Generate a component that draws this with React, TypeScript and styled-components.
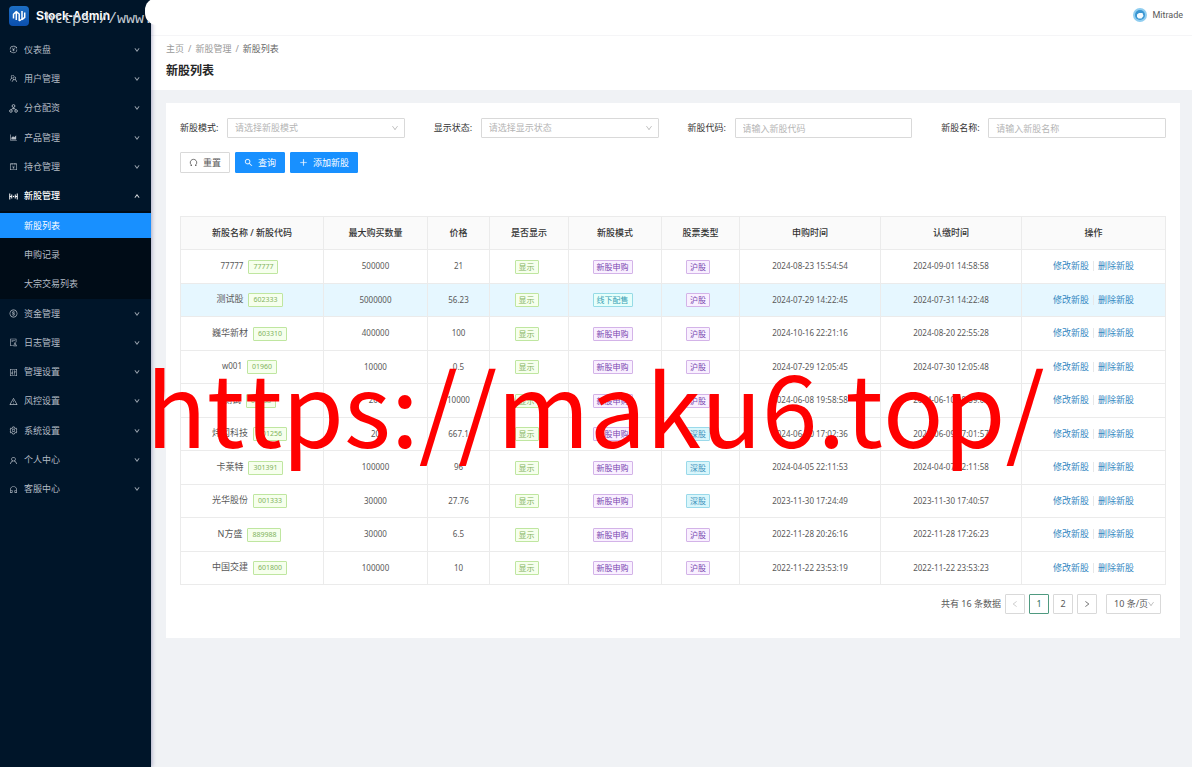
import React from 'react';
import styled, { createGlobalStyle, css } from 'styled-components';
import {
  AiOutlineTransaction,
  AiOutlineTeam,
  AiOutlineAreaChart,
  AiOutlineAccountBook,
  AiOutlineDollar,
  AiOutlineAudit,
  AiOutlineControl,
  AiOutlineWarning,
  AiOutlineSetting,
  AiOutlineUser,
  AiOutlineCustomerService,
  AiOutlineDown,
  AiOutlineUp,
  AiOutlineLeft,
  AiOutlineRight,
  AiOutlineSearch,
  AiOutlinePlus,
} from 'react-icons/ai';

const GlobalStyle = createGlobalStyle`
  * { box-sizing: border-box; }
  body {
    margin: 0;
    background: #f0f2f5;
    color: #595959;
    font-family: "Noto Sans", "Noto Sans CJK SC", sans-serif;
    font-size: 9px;
    line-height: 14px;
  }
  button, input, select { font: inherit; color: inherit; margin: 0; }
  ul, ol { list-style: none; margin: 0; padding: 0; }
  a { color: inherit; text-decoration: none; }
`;

const Page = styled.div`
  position: relative;
  display: flex;
  min-height: 100vh;
`;

const Sidebar = styled.aside`
  position: relative;
  flex: 0 0 151px;
  background: #001529;
  color: #b4bcc5;
  box-shadow: 1px 0 4px rgba(40, 40, 110, 0.35);
`;

const Brand = styled.div`
  display: flex;
  align-items: center;
  gap: 7px;
  height: 35px;
  padding: 0 0 3px 9px;
  color: #fff;
  font: bold 12px/16px "Liberation Sans", sans-serif;
`;

const BrandMark = styled.svg`
  width: 20px;
  height: 20px;
`;

const BrandStamp = styled.span`
  position: absolute;
  top: 10px;
  left: 45px;
  color: #c3cad2;
  font: 15px/20px "Liberation Mono", monospace;
  white-space: nowrap;
  pointer-events: none;
`;

const CornerPatch = styled.span`
  position: absolute;
  top: -2px;
  left: 145px;
  width: 40px;
  height: 27px;
  border-radius: 12px;
  background: #fff;
`;

const MenuGroup = styled.ul<{ $height: number; $nested?: boolean }>`
  display: grid;
  grid-auto-rows: 1fr;
  align-items: center;
  min-height: ${(p) => p.$height}px;
  background: ${(p) => (p.$nested ? '#000c17' : 'transparent')};
`;

const MenuButton = styled.button<{ $open?: boolean }>`
  display: flex;
  align-items: center;
  gap: 6px;
  width: 100%;
  height: 25px;
  padding: 0 11px 0 9px;
  border: 0;
  background: none;
  color: ${(p) => (p.$open ? '#fff' : 'inherit')};
  font-weight: ${(p) => (p.$open ? 500 : 400)};
  text-align: left;

  span { flex: 1; }
  > svg:first-child { width: 9px; height: 9px; }
  > svg:last-child { width: 6px; height: 6px; stroke: currentColor; stroke-width: 60px; }
`;

const SubLink = styled.a<{ $active?: boolean }>`
  display: flex;
  align-items: center;
  height: 25px;
  padding-left: 24px;
  ${(p) =>
    p.$active &&
    css`
      background: #1890ff;
      color: #fff;
    `}
`;

const Main = styled.div`
  flex: 1;
  min-width: 0;
`;

const TopBar = styled.header`
  display: flex;
  align-items: center;
  justify-content: flex-end;
  gap: 5px;
  height: 36px;
  padding: 0 9px 5px;
  border-bottom: 1px solid #f5f5f7;
  background: #fff;
  font-family: Roboto, sans-serif;
`;

const Avatar = styled.svg`
  width: 14px;
  height: 14px;
`;

const PageHead = styled.div`
  height: 54px;
  padding: 6px 15px;
  background: #fff;
`;

const Crumbs = styled.ol`
  display: flex;
  gap: 4px;
  color: #999;

  li + li::before {
    content: "/";
    margin-right: 4px;
    color: #999;
  }
  li:last-child { color: #666; }
`;

const Title = styled.h1`
  margin: 6px 0 0;
  color: #262626;
  font-size: 12px;
  font-weight: 700;
  line-height: 18px;
`;

const Card = styled.main`
  margin: 13px 12px 13px 15px;
  padding: 15px 14px 24px;
  background: #fff;
`;

const Filters = styled.form`
  display: grid;
  grid-template-columns: repeat(4, 1fr);
  gap: 14px 29px;
`;

const Field = styled.div`
  display: flex;
  align-items: center;

  label {
    flex: 0 0 47px;
    color: #333;
  }
`;

const controlBox = css`
  height: 20px;
  border: 1px solid #d9d9d9;
  border-radius: 1px;
  background: #fff;
`;

const TextInput = styled.input`
  ${controlBox}
  flex: 1;
  min-width: 0;
  padding: 0 7px;
  &::placeholder { color: #b5b5b5; opacity: 1; }
`;

const SelectWrap = styled.span`
  position: relative;
  display: flex;
  flex: 1;
  min-width: 0;

  svg {
    position: absolute;
    top: 6px;
    right: 6px;
    width: 8px;
    height: 8px;
    color: #b5b5b5;
    pointer-events: none;
  }
`;

const Select = styled.select<{ $empty?: boolean }>`
  ${controlBox}
  appearance: none;
  width: 100%;
  padding: 0 7px;
  color: ${(p) => (p.$empty ? '#b5b5b5' : '#595959')};
`;

const Actions = styled.div`
  display: flex;
  grid-column: 1 / -1;
  gap: 5px;
`;

const Button = styled.button<{ $primary?: boolean }>`
  ${controlBox}
  display: flex;
  align-items: center;
  gap: 5px;
  height: 21px;
  padding: 0 8px;

  svg { width: 9px; height: 9px; stroke: currentColor; stroke-width: 20px; }
  ${(p) =>
    p.$primary &&
    css`
      border-color: #1890ff;
      background: #1890ff;
      color: #fff;
    `}
`;

const Table = styled.table`
  width: 100%;
  height: 369px;
  margin-top: 43px;
  border-collapse: collapse;
  table-layout: fixed;
  text-align: center;

  th, td {
    padding: 0;
    border: 1px solid #ebebeb;
  }
  th {
    height: 33px;
    background: #fafafa;
    color: #333;
    font-weight: 500;
  }
`;

const Col = styled.col<{ $w: number }>`
  width: ${(p) => p.$w}px;
`;

const Row = styled.tr<{ $hover?: boolean }>`
  background: ${(p) => (p.$hover ? '#e6f7ff' : '#fff')};
`;

const NumCell = styled.td`
  font-size: 8px;
`;

const NameText = styled.span<{ $latin: boolean }>`
  margin-right: 5px;
  font-size: ${(p) => (p.$latin ? 8 : 9)}px;
`;

const tones = {
  green: ['#7fb35c', '#f6ffed', '#bfe6a0'],
  purple: ['#7a48b0', '#f9f0ff', '#d3b3e8'],
  cyan: ['#3a9fb5', '#e6fffb', '#96dbe6'],
  blue: ['#3f93bd', '#d9f6fb', '#9ad9ea'],
};
type Tone = keyof typeof tones;

const Tag = styled.span<{ $tone: Tone; $code?: boolean }>`
  display: inline-block;
  margin-right: 5px;
  padding: 0 ${(p) => (p.$code ? 4 : 3)}px;
  border: 1px solid ${(p) => tones[p.$tone][2]};
  border-radius: 1px;
  background: ${(p) => tones[p.$tone][1]};
  color: ${(p) => tones[p.$tone][0]};
  font-size: ${(p) => (p.$code ? 7 : 8)}px;
  line-height: 12px;
  vertical-align: middle;
`;

const RowLinks = styled.div`
  display: flex;
  align-items: center;
  justify-content: center;
  color: #3387bf;

  a + a {
    margin-left: 4px;
    padding-left: 4px;
    border-left: 1px solid #e8e8e8;
    line-height: 10px;
  }
`;

const Pager = styled.nav`
  display: flex;
  align-items: center;
  justify-content: flex-end;
  gap: 4px;
  margin-top: 9px;
  padding-right: 5px;
`;

const PageButton = styled.button<{ $current?: boolean }>`
  ${controlBox}
  display: grid;
  place-items: center;
  width: 20px;
  padding: 0;
  ${(p) =>
    p.$current &&
    css`
      border-color: #4f9a80;
      color: #2f6f5a;
    `}
  &:disabled { color: #c4c4c4; }
  svg { width: 8px; height: 8px; }
`;

const PageSize = styled.div`
  display: flex;
  width: 60px;
  padding-left: 5px;
`;

const Watermark = styled.div`
  position: absolute;
  top: 332px;
  left: 146px;
  color: #f00;
  font: 100px/145px "Noto Sans CJK SC", sans-serif;
  font-kerning: none;
  white-space: nowrap;
  pointer-events: none;
`;

const NodesIcon = () => (
  <svg viewBox="0 0 18 18" fill="none" stroke="currentColor" strokeWidth="1.8" aria-hidden="true">
    <circle cx="9" cy="4" r="2.8" />
    <circle cx="3.8" cy="14" r="2.6" />
    <circle cx="14.2" cy="14" r="2.6" />
    <path d="M9 7V9.5M4.5 11.5L6 9.5H12L13.5 11.5" />
  </svg>
);

const IssueIcon = () => (
  <svg viewBox="0 0 18 18" fill="none" stroke="currentColor" strokeWidth="2" aria-hidden="true">
    <path d="M1.5 3V15M16.5 3V15M5.5 5V13M12.5 5V13M1.5 9H5.5M12.5 9H16.5" />
    <circle cx="9" cy="9" r="1.4" fill="currentColor" stroke="none" />
  </svg>
);

const ResetIcon = () => (
  <svg viewBox="0 0 1024 1024" fill="none" aria-hidden="true">
    <path d="M340 850A370 370 0 1 1 684 850M340 850H170M684 850H854" strokeWidth="95" />
  </svg>
);

const menuTop = [
  { icon: AiOutlineTransaction, label: '仪表盘' },
  { icon: AiOutlineTeam, label: '用户管理' },
  { icon: NodesIcon, label: '分仓配资' },
  { icon: AiOutlineAreaChart, label: '产品管理' },
  { icon: AiOutlineAccountBook, label: '持仓管理' },
  { icon: IssueIcon, label: '新股管理', open: true },
];

const menuSub = ['新股列表', '申购记录', '大宗交易列表'];

const menuBottom = [
  { icon: AiOutlineDollar, label: '资金管理' },
  { icon: AiOutlineAudit, label: '日志管理' },
  { icon: AiOutlineControl, label: '管理设置' },
  { icon: AiOutlineWarning, label: '风控设置' },
  { icon: AiOutlineSetting, label: '系统设置' },
  { icon: AiOutlineUser, label: '个人中心' },
  { icon: AiOutlineCustomerService, label: '客服中心' },
];

type MenuEntry = { icon: React.ComponentType; label: string; open?: boolean };

const MenuItem = ({ icon: Icon, label, open }: MenuEntry) => (
  <li>
    <MenuButton type="button" $open={open} aria-expanded={!!open}>
      <Icon />
      <span>{label}</span>
      {open ? <AiOutlineUp /> : <AiOutlineDown />}
    </MenuButton>
  </li>
);

const columns = [
  { title: '新股名称 / 新股代码', w: 143 },
  { title: '最大购买数量', w: 104 },
  { title: '价格', w: 62 },
  { title: '是否显示', w: 79 },
  { title: '新股模式', w: 93 },
  { title: '股票类型', w: 78 },
  { title: '申购时间', w: 141 },
  { title: '认缴时间', w: 141 },
  { title: '操作', w: 144 },
];

const rows = [
  ['77777', '77777', '500000', '21', '新股申购', '沪股', '2024-08-23 15:54:54', '2024-09-01 14:58:58'],
  ['测试股', '602333', '5000000', '56.23', '线下配售', '沪股', '2024-07-29 14:22:45', '2024-07-31 14:22:48'],
  ['巍华新材', '603310', '400000', '100', '新股申购', '沪股', '2024-10-16 22:21:16', '2024-08-20 22:55:28'],
  ['w001', '01960', '10000', '0.5', '新股申购', '沪股', '2024-07-29 12:05:45', '2024-07-30 12:05:48'],
  ['测试', '01688', '200', '10000', '新股申购', '沪股', '2024-06-08 19:58:58', '2024-06-10 19:59:02'],
  ['炜冈科技', '001256', '20', '667.1', '新股申购', '深股', '2024-06-10 17:02:36', '2024-06-09 17:01:57'],
  ['卡莱特', '301391', '100000', '96', '新股申购', '深股', '2024-04-05 22:11:53', '2024-04-07 22:11:58'],
  ['光华股份', '001333', '30000', '27.76', '新股申购', '深股', '2023-11-30 17:24:49', '2023-11-30 17:40:57'],
  ['N方盛', '889988', '30000', '6.5', '新股申购', '沪股', '2022-11-28 20:26:16', '2022-11-28 17:26:23'],
  ['中国交建', '601800', '100000', '10', '新股申购', '沪股', '2022-11-22 23:53:19', '2022-11-22 23:53:23'],
];

export default function App() {
  return (
    <Page>
      <GlobalStyle />
      <Sidebar>
        <Brand>
          <BrandMark viewBox="0 0 20 20" aria-hidden="true">
            <defs>
              <linearGradient id="mark" x1="0" y1="0" x2="0" y2="1">
                <stop offset="0" stopColor="#1d6fc4" />
                <stop offset="1" stopColor="#0b4fae" />
              </linearGradient>
            </defs>
            <rect width="20" height="20" rx="4" fill="url(#mark)" />
            <path
              d="M4.5 12.5V8.2L7.3 5.6V14M7.3 5.6L10.2 8V15M10.2 15L13 13V5M13 13.6L15.7 11.4V6.6"
              fill="none"
              stroke="#fff"
              strokeWidth="1.5"
              strokeLinejoin="round"
            />
          </BrandMark>
          <span>Stock-Admin</span>
        </Brand>
        <nav aria-label="主菜单">
          <MenuGroup $height={176}>
            {menuTop.map((m) => (
              <MenuItem key={m.label} {...m} />
            ))}
          </MenuGroup>
          <MenuGroup $height={88} $nested>
            {menuSub.map((label, i) => (
              <li key={label}>
                <SubLink href="#" $active={i === 0}>
                  {label}
                </SubLink>
              </li>
            ))}
          </MenuGroup>
          <MenuGroup $height={205}>
            {menuBottom.map((m) => (
              <MenuItem key={m.label} {...m} />
            ))}
          </MenuGroup>
        </nav>
        <CornerPatch />
        <BrandStamp>https://www.</BrandStamp>
      </Sidebar>

      <Main>
        <TopBar>
          <Avatar viewBox="0 0 14 14" aria-hidden="true">
            <circle cx="7" cy="7" r="7" fill="#8fcdf0" />
            <circle cx="7" cy="7" r="5" fill="#3a96d2" />
            <path d="M4 6.5L6 5H9.5L10.5 8L8.5 10.5H5.5L4 9Z" fill="#f4fbff" />
          </Avatar>
          <span>Mitrade</span>
        </TopBar>
        <PageHead>
          <nav aria-label="面包屑">
            <Crumbs>
              <li><a href="#">主页</a></li>
              <li><a href="#">新股管理</a></li>
              <li>新股列表</li>
            </Crumbs>
          </nav>
          <Title>新股列表</Title>
        </PageHead>

        <Card>
          <Filters onSubmit={(e) => e.preventDefault()}>
            <Field>
              <label htmlFor="mode">新股模式:</label>
              <SelectWrap>
                <Select id="mode" $empty defaultValue="">
                  <option value="">请选择新股模式</option>
                </Select>
                <AiOutlineDown />
              </SelectWrap>
            </Field>
            <Field>
              <label htmlFor="status">显示状态:</label>
              <SelectWrap>
                <Select id="status" $empty defaultValue="">
                  <option value="">请选择显示状态</option>
                </Select>
                <AiOutlineDown />
              </SelectWrap>
            </Field>
            <Field>
              <label htmlFor="code">新股代码:</label>
              <TextInput id="code" placeholder="请输入新股代码" />
            </Field>
            <Field>
              <label htmlFor="name">新股名称:</label>
              <TextInput id="name" placeholder="请输入新股名称" />
            </Field>
            <Actions>
              <Button type="reset"><ResetIcon />重置</Button>
              <Button type="submit" $primary><AiOutlineSearch />查询</Button>
              <Button type="button" $primary><AiOutlinePlus />添加新股</Button>
            </Actions>
          </Filters>

          <Table>
            <colgroup>
              {columns.map((c) => (
                <Col key={c.title} $w={c.w} />
              ))}
            </colgroup>
            <thead>
              <tr>
                {columns.map((c) => (
                  <th key={c.title} scope="col">{c.title}</th>
                ))}
              </tr>
            </thead>
            <tbody>
              {rows.map(([name, code, qty, price, mode, kind, applied, paid], i) => (
                <Row key={code} $hover={i === 1}>
                  <td>
                    <NameText $latin={/^\w+$/.test(name)}>{name}</NameText>
                    <Tag $tone="green" $code>{code}</Tag>
                  </td>
                  <NumCell>{qty}</NumCell>
                  <NumCell>{price}</NumCell>
                  <td><Tag $tone="green">显示</Tag></td>
                  <td><Tag $tone={mode === '新股申购' ? 'purple' : 'cyan'}>{mode}</Tag></td>
                  <td><Tag $tone={kind === '沪股' ? 'purple' : 'blue'}>{kind}</Tag></td>
                  <NumCell>{applied}</NumCell>
                  <NumCell>{paid}</NumCell>
                  <td>
                    <RowLinks>
                      <a href="#">修改新股</a>
                      <a href="#">删除新股</a>
                    </RowLinks>
                  </td>
                </Row>
              ))}
            </tbody>
          </Table>

          <Pager aria-label="分页">
            <span>共有 16 条数据</span>
            <PageButton type="button" disabled aria-label="上一页"><AiOutlineLeft /></PageButton>
            <PageButton type="button" $current>1</PageButton>
            <PageButton type="button">2</PageButton>
            <PageButton type="button" aria-label="下一页"><AiOutlineRight /></PageButton>
            <PageSize>
              <SelectWrap>
                <Select aria-label="每页条数" defaultValue="10">
                  <option value="10">10 条/页</option>
                </Select>
                <AiOutlineDown />
              </SelectWrap>
            </PageSize>
          </Pager>
        </Card>
      </Main>
      <Watermark>https://maku6.top/</Watermark>
    </Page>
  );
}
